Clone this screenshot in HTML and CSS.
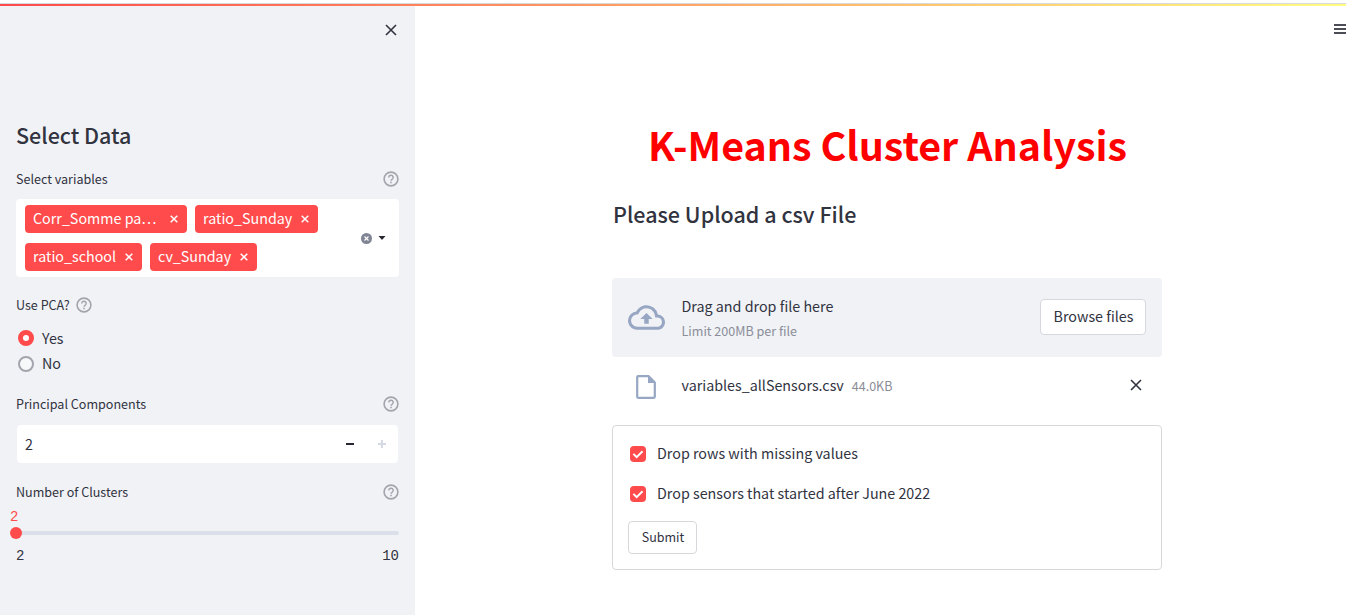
FILE: index.html
```
<!DOCTYPE html>
<html lang="en">
<head>
<meta charset="utf-8">
<title>K-Means Cluster Analysis</title>
<link rel="stylesheet" href="styles.css">
</head>
<body>
<svg class="defs" width="0" height="0">
  <symbol id="help" viewBox="0 0 16 16"><circle cx="8" cy="8" r="6.9" fill="none" stroke="#a3a5ad" stroke-width="1.6"/><path d="M5.8 6.5a2.2 2.2 0 1 1 3.3 1.8C8.3 8.8 8 9 8 9.8" fill="none" stroke="#a3a5ad" stroke-width="1.5"/><path d="M7.2 10.7h1.6v1.5H7.2z" fill="#a3a5ad"/></symbol>
  <symbol id="cross" viewBox="0 0 12 12"><path d="M1 1l10 10M11 1L1 11" fill="none" stroke="currentColor" stroke-width="1.6"/></symbol>
  <symbol id="tagx" viewBox="0 0 8 8"><path d="M.7.7l6.6 6.6M7.3.7L.7 7.3" fill="none" stroke="#fff" stroke-width="1.5"/></symbol>
</svg>
<div class="topline"></div>
<div class="app">
  <aside class="sidebar">
    <div class="close-row"><svg class="close"><use href="#cross"/></svg></div>
    <h2 class="side-title">Select Data</h2>
    <div class="label-row label-variables"><span>Select variables</span><svg class="help"><use href="#help"/></svg></div>
    <div class="multiselect">
      <div class="tags">
        <span class="tag tag-corr"><span class="t">Corr_Somme pa…</span><svg><use href="#tagx"/></svg></span>
        <span class="tag tag-ratio"><span class="t">ratio_Sunday</span><svg><use href="#tagx"/></svg></span>
        <span class="tag tag-school"><span class="t">ratio_school</span><svg><use href="#tagx"/></svg></span>
        <span class="tag tag-cv"><span class="t">cv_Sunday</span><svg><use href="#tagx"/></svg></span>
      </div>
      <div class="select-tools">
        <svg width="11" height="11" viewBox="0 0 10 10"><circle cx="5" cy="5" r="5" fill="#808495"/><path d="M3.2 3.2l3.6 3.6M6.8 3.2L3.2 6.8" stroke="#fff" stroke-width="1.1"/></svg>
        <svg width="8" height="4" viewBox="0 0 8 4"><path d="M.5 0h7L4.4 3.6q-.4.4-.8 0z" fill="#262730"/></svg>
      </div>
    </div>
    <div class="label-row label-pca"><span>Use PCA?</span><svg class="help"><use href="#help"/></svg></div>
    <div class="radio"><i class="dot on"></i><span>Yes</span></div>
    <div class="radio"><i class="dot"></i><span class="t">No</span></div>
    <div class="label-row label-components"><span>Principal Components</span><svg class="help"><use href="#help"/></svg></div>
    <div class="number"><span>2</span>
      <svg class="step" width="40" height="10" viewBox="0 0 40 10"><path d="M0 4h8v2H0z" fill="#262730"/><path d="M32 4h3V1h2v3h3v2h-3v3h-2V6h-3z" fill="#d5d9e3"/></svg>
    </div>
    <div class="label-row label-clusters"><span>Number of Clusters</span><svg class="help"><use href="#help"/></svg></div>
    <div class="slider">
      <div class="value">2</div>
      <div class="track"><i class="thumb"></i></div>
      <div class="range"><span>2</span><span>10</span></div>
    </div>
  </aside>
  <main class="main">
    <div class="menu-row"><svg width="12" height="10" viewBox="0 0 12 10"><path d="M0 0h12v2H0zM0 4h12v2H0zM0 8h12v2H0z" fill="#4b4c56"/></svg></div>
    <div class="content">
      <h1 class="title">K-Means Cluster Analysis</h1>
      <h3 class="subtitle">Please Upload a csv File</h3>
      <div class="dropzone">
        <svg class="cloud" viewBox="0 0 24 16"><path d="M19.35 6.04A7.49 7.49 0 0 0 12 0C9.11 0 6.6 1.64 5.35 4.04A5.994 5.994 0 0 0 0 10c0 3.31 2.69 6 6 6h13c2.76 0 5-2.24 5-5 0-2.64-2.05-4.78-4.65-4.96zM19 14H6c-2.21 0-4-1.79-4-4 0-2.05 1.53-3.76 3.56-3.97l1.07-.11.5-.95A5.469 5.469 0 0 1 12 2c2.62 0 4.88 1.86 5.39 4.43l.3 1.5 1.53.11A2.98 2.98 0 0 1 22 11c0 1.65-1.35 3-3 3zM8 9h2.55v3h2.9V9H16l-4-4z" fill="#97a6c3"/></svg>
        <div class="drop-text"><span class="drop-main">Drag and drop file here</span><span class="drop-limit">Limit 200MB per file</span></div>
        <div class="browse"><span class="t">Browse files</span></div>
      </div>
      <div class="file-row">
        <svg class="file" viewBox="0 0 20 24"><path d="M2.2 1.2h10.3L18.8 7.5v14.3q0 1-1 1H2.2q-1 0-1-1V2.2q0-1 1-1z" fill="none" stroke="#97a6c3" stroke-width="2.2"/><path d="M12 1v7h7z" fill="#97a6c3"/></svg>
        <span class="file-name">variables_allSensors.csv</span><span class="file-size">44.0KB</span>
        <svg class="close"><use href="#cross"/></svg>
      </div>
      <div class="form">
        <div class="check"><svg width="16" height="16" viewBox="0 0 16 16"><rect width="16" height="16" rx="4" fill="#ff4b4b"/><path d="M3.4 7.9l3.2 3.2 6-5.9" fill="none" stroke="#fff" stroke-width="2"/></svg><span class="t">Drop rows with missing values</span></div>
        <div class="check"><svg width="16" height="16" viewBox="0 0 16 16"><rect width="16" height="16" rx="4" fill="#ff4b4b"/><path d="M3.4 7.9l3.2 3.2 6-5.9" fill="none" stroke="#fff" stroke-width="2"/></svg><span class="t">Drop sensors that started after June 2022</span></div>
        <div class="submit"><span class="t">Submit</span></div>
      </div>
    </div>
  </main>
</div>
</body>
</html>
```

FILE: styles.css
```
* { box-sizing: border-box; }
body { margin: 0; height: 615px; overflow: hidden; background: #fff; color: #31333f; font: 14.3px/24px "Noto Sans CJK SC", "Open Sans", sans-serif; white-space: nowrap; }
h1, h2, h3 { margin: 0; }
svg { display: block; flex: none; }
.t { padding-bottom: 2px; }
.defs { position: absolute; }
.topline { height: 6px; padding-top: 4px; background: linear-gradient(90deg, #ff4b4b, #fffd80) content-box, linear-gradient(#d8d9dc, #d8d9dc) 0 3px / 100% 1px no-repeat, #fff; }
.app { display: flex; height: 609px; }
.sidebar { width: 415px; flex: none; background: #f0f2f6; padding: 0 16px; }
.close-row { height: 111px; padding: 18px 2px 0 0; display: flex; justify-content: flex-end; }
.close { width: 12px; height: 12px; }
.side-title { font-size: 21.5px; line-height: 36px; font-weight: 500; }
.label-row { display: flex; height: 20px; align-items: center; justify-content: space-between; font-size: 12.55px; line-height: 20px; }
.help { width: 16px; height: 16px; }
.label-variables { margin-top: 16px; }
.multiselect { margin-top: 10px; width: 383px; height: 78px; border-radius: 4px; background: #fff; display: flex; justify-content: space-between; padding: 6px 13px 6px 9px; }
.tags { width: 300px; display: flex; flex-wrap: wrap; gap: 10px 8px; }
.tag { height: 28px; border-radius: 4px; background: #ff4b4b; color: #fff; display: flex; align-items: center; justify-content: space-between; padding: 0 9px 0 8px; }
.tag svg { width: 8px; height: 8px; }
.tag-corr { width: 162px; }
.tag-ratio { width: 123px; }
.tag-school { width: 117px; }
.tag-cv { width: 107px; }
.select-tools { display: flex; gap: 6px; align-items: center; }
.label-pca { margin-top: 18px; justify-content: flex-start; gap: 6px; margin-bottom: 10px; }
.radio { height: 26px; display: flex; align-items: center; gap: 8px; padding-left: 2px; }
.dot { width: 16px; height: 16px; border: 2px solid #a3a5ad; background: #f7f8fa; border-radius: 50%; }
.dot.on { border: 5px solid #ff4b4b; background: #fff; }
.label-components { margin-top: 17px; }
.number { margin: 11px 1px 0; height: 38px; border-radius: 4px; background: #fff; display: flex; align-items: center; justify-content: space-between; padding: 0 12px 0 8px; }
.label-clusters { margin-top: 19px; }
.slider { font: 14px/16px "Liberation Mono", monospace; }
.value { margin: 7px 0 0 -6px; color: #ff4b4b; }
.track { margin-top: 6px; height: 4px; background: #dadfe9; border-radius: 0 2px 2px 0; display: flex; align-items: center; }
.thumb { width: 12px; height: 12px; border-radius: 50%; background: #ff4b4b; margin-left: -6px; flex: none; }
.range { margin-top: 13px; display: flex; justify-content: space-between; }
.main { flex: 1; }
.menu-row { height: 105px; padding-top: 18px; display: flex; justify-content: flex-end; }
.content { width: 550px; margin-left: 197px; }
.title { height: 66px; color: #f00; font-size: 39.4px; line-height: 66px; font-weight: 700; text-align: center; padding-left: 1px; }
.subtitle { margin-top: 19px; height: 36px; font-size: 21.5px; line-height: 36px; font-weight: 500; padding-left: 1px; }
.dropzone { margin-top: 46px; height: 79px; border-radius: 4px; background: #f0f2f6; display: flex; align-items: center; padding: 0 16px; }
.cloud { width: 37px; height: 25px; }
.drop-text { display: flex; flex-direction: column; margin-left: 16.5px; padding-top: 2px; flex: 1; }
.drop-limit { font-size: 12.55px; color: #8b8d98; padding-top: 1px; line-height: 24px; }
.browse { width: 106px; height: 36px; border: 1px solid #d6d8de; border-radius: 4px; background: #fff; display: flex; align-items: center; justify-content: center; margin-bottom: 2px; padding-left: 1px; }
.file-row { height: 68px; display: flex; align-items: center; padding: 0 20px 12px 24px; }
.file { width: 20px; height: 24px; margin-top: 3px; }
.file-name { margin-left: 25.5px; }
.file-size { margin-left: 8px; padding-top: 2px; font-size: 12.5px; color: #8b8d98; flex: 1; }
.form { height: 145px; border: 1px solid #d6d8dc; border-radius: 4px; padding: 16px 15px; }
.check { height: 24px; margin-bottom: 16px; padding-left: 2px; display: flex; align-items: center; gap: 11px; }
.submit { width: 69px; height: 33px; border: 1px solid #d6d8dc; border-radius: 4px; display: flex; align-items: center; justify-content: center; font-size: 12.5px; margin-top: -1px; padding-left: 1px; }
```
